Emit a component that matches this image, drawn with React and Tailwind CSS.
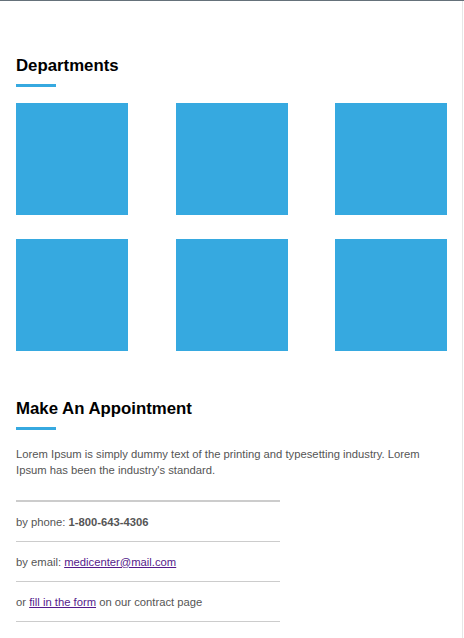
export default function App() {
  const blue = "bg-[#36a9e0]";
  return (
    <div className="w-[464px] h-[638px] overflow-hidden bg-white border-t border-[#65717a] font-['Liberation_Sans',Arial,sans-serif]">
      <div className="w-[463px] h-full border-r border-[#e6e6e6] px-4">
        <h2 className="pt-[54px] text-[16.8px] leading-[21px] font-bold text-black">Departments</h2>
        <div className={`mt-[8px] h-[3px] w-10 ${blue}`} />
        <div className="mt-4 grid grid-cols-[112px_112px_112px] justify-between gap-y-6 w-[431px]">
          {[0, 1, 2, 3, 4, 5].map((i) => (
            <div key={i} className={`h-[112px] w-[112px] ${blue}`} />
          ))}
        </div>
        <h2 className="mt-[47px] text-[16.8px] leading-[21px] font-bold text-black">Make An Appointment</h2>
        <div className={`mt-[8px] h-[3px] w-10 ${blue}`} />
        <p className="mt-4 text-[11.25px] leading-4 text-[#555] pr-2">
          Lorem Ipsum is simply dummy text of the printing and typesetting industry. Lorem Ipsum has been the industry's standard.
        </p>
        <div className="mt-[22px] w-[264px] border-t-2 border-[#cccccc] text-[11.25px] text-[#555]">
          <div className="h-[40px] pt-px flex items-center border-b border-[#cccccc]">
            <span>by phone:&nbsp;<b className="font-bold">1-800-643-4306</b></span>
          </div>
          <div className="h-[40px] pt-px flex items-center border-b border-[#cccccc]">
            <span>by email:&nbsp;<a className="underline text-[#551a8b]">medicenter@mail.com</a></span>
          </div>
          <div className="h-[40px] pt-px flex items-center border-b border-[#cccccc]">
            <span>or <a className="underline text-[#551a8b]">fill in the form</a> on our contract page</span>
          </div>
        </div>
      </div>
    </div>
  );
}
